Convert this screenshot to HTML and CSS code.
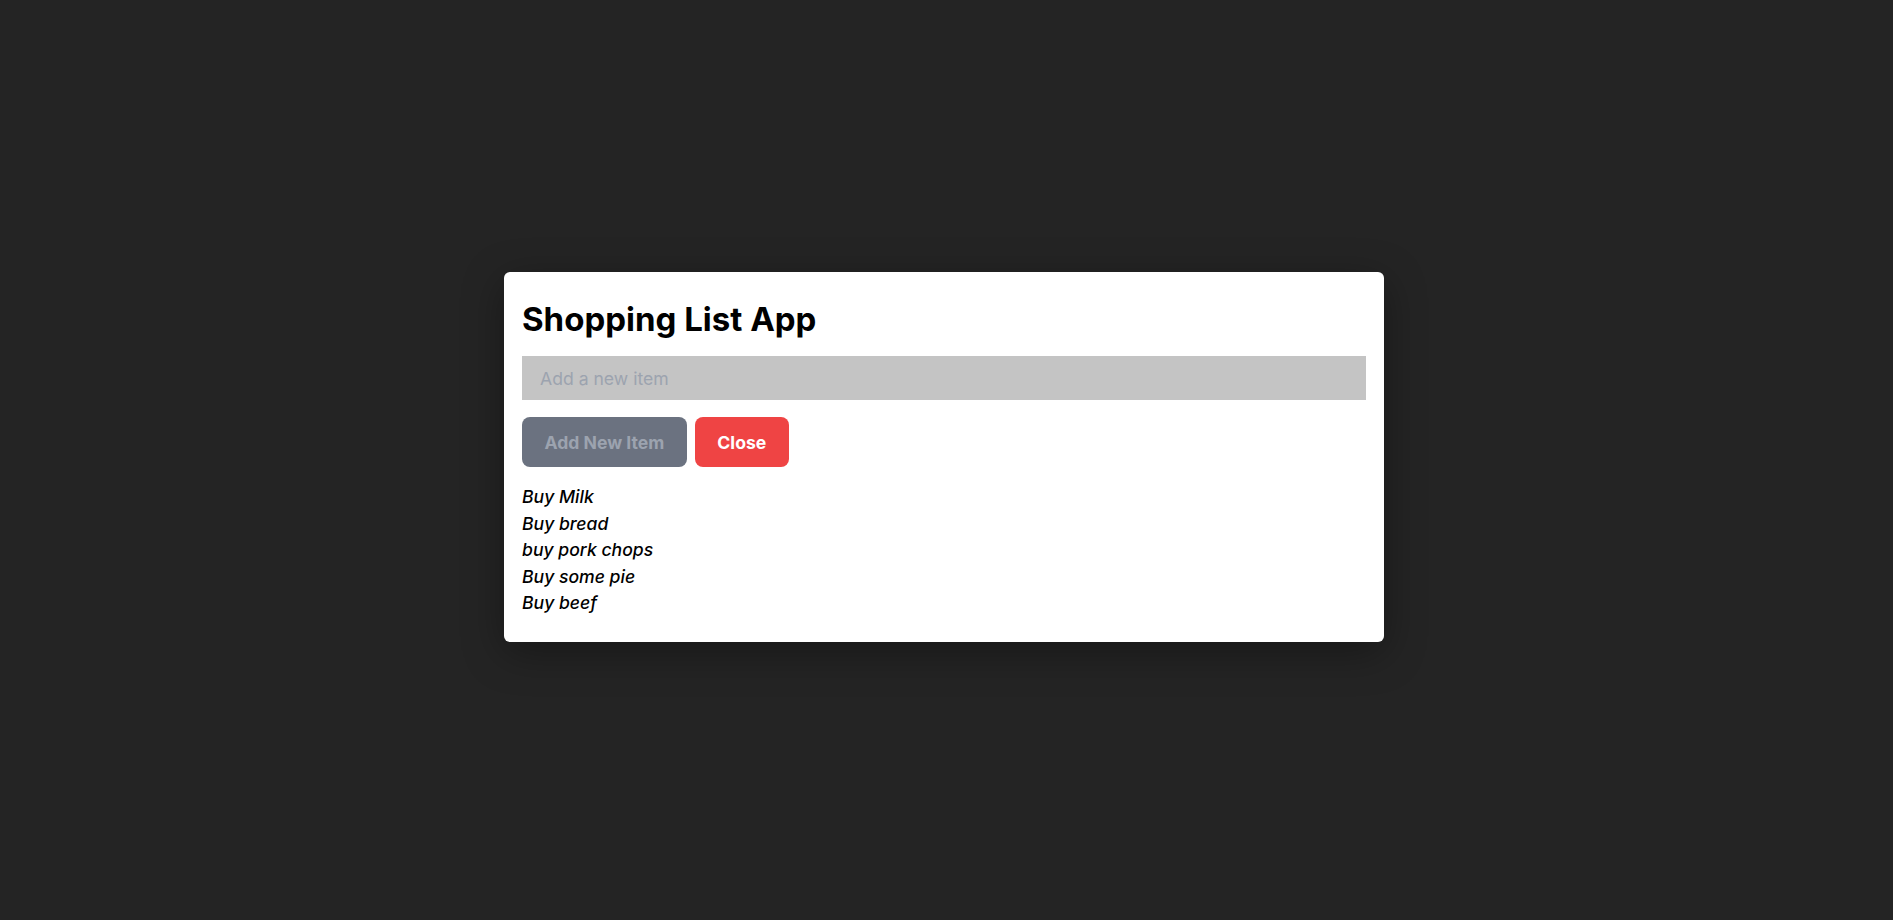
FILE: index.html
```html
<!DOCTYPE html>
<html lang="en">
<head>
<meta charset="utf-8">
<title>Shopping List App</title>
<link rel="stylesheet" href="styles.css">
</head>
<body>
<div class="screen">
  <div class="card">
    <h1 class="title">Shopping List App</h1>
    <input class="field" type="text" placeholder="Add a new item">
    <div class="actions">
      <button class="btn btn-add" disabled>Add New Item</button>
      <button class="btn btn-close">Close</button>
    </div>
    <ul class="items">
      <li>Buy Milk</li>
      <li>Buy bread</li>
      <li>buy pork chops</li>
      <li>Buy some pie</li>
      <li>Buy beef</li>
    </ul>
  </div>
</div>
</body>
</html>
```
FILE: styles.css
```css
* { box-sizing: border-box; }
html, body { margin: 0; padding: 0; }
body {
  background: #242424;
  font-family: Inter, "Noto Sans", sans-serif;
  color: #000;
}
.screen {
  min-height: 100vh;
  display: flex;
  align-items: center;
  justify-content: center;
  padding: 0 5px 6px 0;
}
.card {
  width: 880px;
  background: #fff;
  border-radius: 6px;
  padding: 27px 18px 25px;
  box-shadow: 0 10px 40px rgba(0,0,0,0.35);
}
.title {
  margin: 0 0 17px;
  font-size: 33px;
  line-height: 40px;
  font-weight: 700;
}
.field {
  display: block;
  width: 100%;
  height: 44px;
  border: none;
  outline: none;
  background: #c4c4c4;
  padding: 0 18px;
  font-family: inherit;
  font-size: 17.6px;
  color: #111;
}
.field::placeholder { color: #9ca3af; }
.actions {
  display: flex;
  gap: 8px;
  margin-top: 17px;
}
.btn {
  height: 50px;
  padding: 0 22.5px;
  border: none;
  border-radius: 8px;
  font-family: inherit;
  font-size: 17.6px;
  font-weight: 700;
}
.btn-add { background: #6b7280; color: #9ca3af; }
.btn-close { background: #ef4444; color: #fff; }
.items {
  list-style: none;
  margin: 17px 0 0;
  padding: 0;
  font-size: 17.6px;
  line-height: 26.5px;
  font-style: italic;
  font-weight: 500;
}
```
